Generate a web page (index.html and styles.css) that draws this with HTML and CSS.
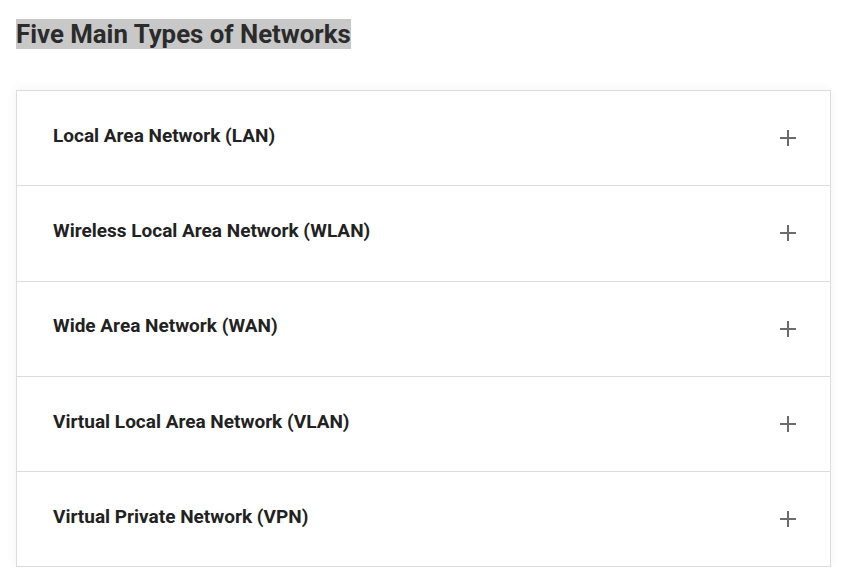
FILE: index.html
```html
<!DOCTYPE html>
<html>
<head>
<meta charset="utf-8">
<link rel="stylesheet" href="styles.css">
</head>
<body>
<div class="page">
  <h2 class="title"><span class="mark">Five Main Types of Networks</span></h2>
  <div class="accordion">
    <div class="item"><span class="label">Local Area Network (LAN)</span><span class="plus"></span></div>
    <div class="item"><span class="label">Wireless Local Area Network (WLAN)</span><span class="plus"></span></div>
    <div class="item"><span class="label">Wide Area Network (WAN)</span><span class="plus"></span></div>
    <div class="item"><span class="label">Virtual Local Area Network (VLAN)</span><span class="plus"></span></div>
    <div class="item"><span class="label">Virtual Private Network (VPN)</span><span class="plus"></span></div>
  </div>
</div>
</body>
</html>
```
FILE: styles.css
```css
html, body { margin: 0; padding: 0; background: #fff; }
body { font-family: Roboto, "Liberation Sans", sans-serif; color: #222; }
.page { padding: 18px 27px 0 16px; }
.title { margin: 0 0 40px 0; font-size: 25.8px; font-weight: 700; line-height: 32px; color: #2b2b2b; }
.mark { background: #c8c8c8; }
.accordion {
  border: 1px solid #dcdcdc;
  box-shadow: 0 0 10px rgba(0,0,0,0.06);
  background: #fff;
}
.item {
  display: flex;
  align-items: center;
  justify-content: space-between;
  height: 94.3px;
  padding: 0 35px 0 36px;
  border-top: 1px solid #dcdcdc;
}
.item:first-child { border-top: none; }
.label { font-size: 19px; font-weight: 700; color: #222; position: relative; top: -3px; }
.plus { width: 16px; height: 16px; position: relative; left: 1px; }
.plus::before, .plus::after {
  content: "";
  position: absolute;
  background: #6b6b6b;
}
.plus::before { left: 0; right: 0; top: 7px; height: 2px; }
.plus::after { top: 0; bottom: 0; left: 7px; width: 2px; }
```
